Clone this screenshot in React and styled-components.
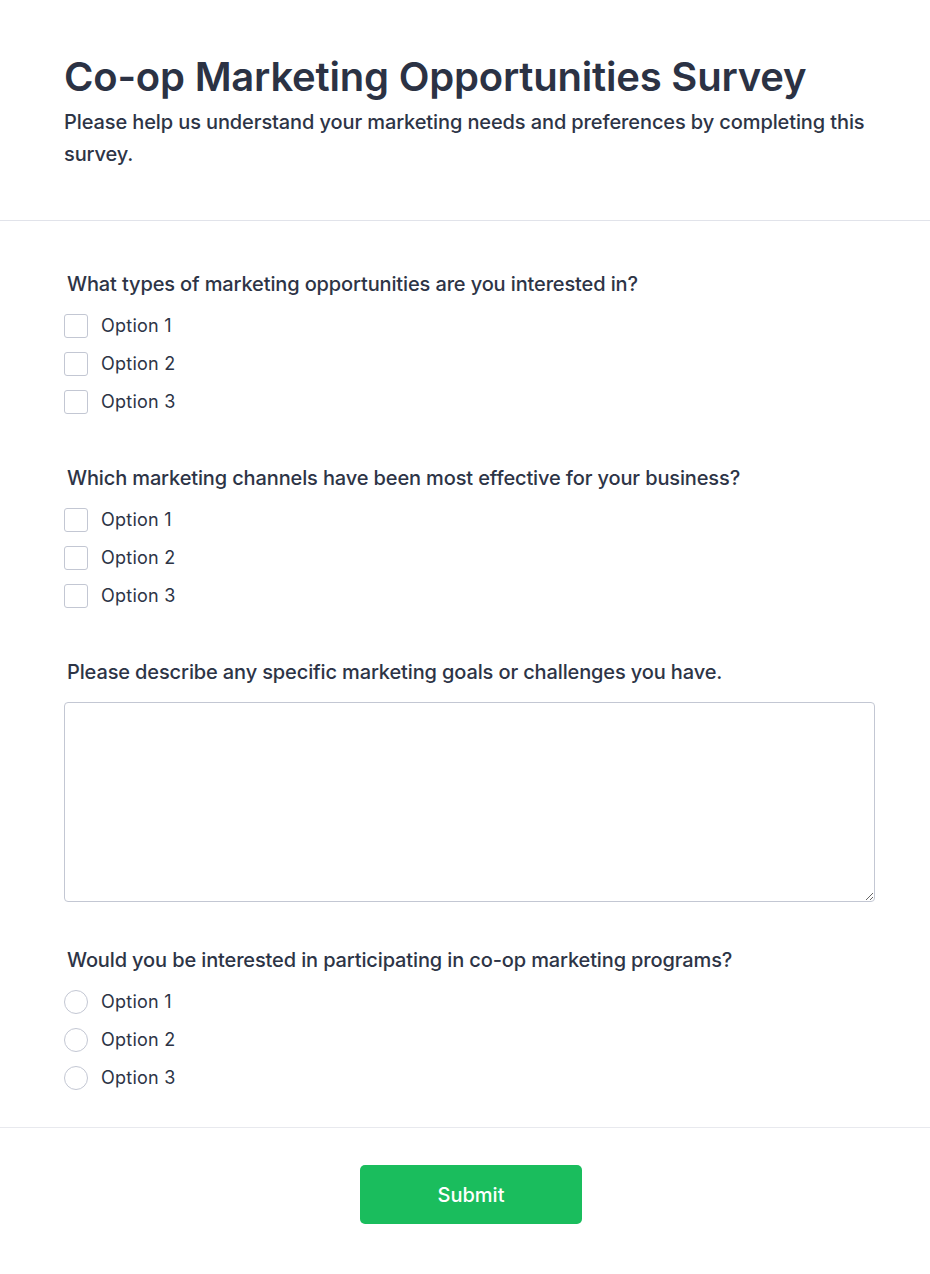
import React from 'react'
import styled, { createGlobalStyle } from 'styled-components'

const GlobalStyle = createGlobalStyle`
  html, body {
    margin: 0;
    padding: 0;
    background: #ffffff;
  }
  body {
    font-family: 'Inter', 'Noto Sans', sans-serif;
    color: #2d3446;
  }
  * { box-sizing: border-box; }
`

const Page = styled.div`
  width: 930px;
  min-height: 1274px;
  background: #ffffff;
`

const Header = styled.header`
  padding: 57px 55px 50px 64px;
  border-bottom: 1px solid #e1e3ea;
`

const Title = styled.h1`
  margin: 0 0 9px;
  font-size: 40px;
  line-height: 40px;
  font-weight: 600;
  color: #2b3244;
  letter-spacing: -0.2px;
`

const Subtitle = styled.p`
  margin: 0;
  font-size: 20px;
  line-height: 32px;
  font-weight: 500;
  letter-spacing: -0.11px;
  color: #2d3446;
`

const Form = styled.form`
  padding: 49px 55px 35px 64px;
  border-bottom: 1px solid #e8e9ee;
  display: flex;
  flex-direction: column;
  gap: 48px;
`

const Question = styled.div`
  display: flex;
  flex-direction: column;
`

const QuestionLabel = styled.div`
  padding-left: 3px;
  margin-bottom: 14px;
  font-size: 20px;
  line-height: 28px;
  font-weight: 500;
  letter-spacing: -0.13px;
  color: #2d3446;
`

const Options = styled.div`
  display: flex;
  flex-direction: column;
  gap: 10px;
`

const OptionRow = styled.label`
  display: flex;
  align-items: center;
  gap: 13px;
  height: 28px;
  font-size: 18px;
  line-height: 28px;
  letter-spacing: 0.25px;
  color: #2d3446;
  cursor: pointer;
`

const Box = styled.input`
  appearance: none;
  margin: 0;
  width: 24px;
  height: 24px;
  flex: none;
  background: #fff;
  border: 1px solid #c3c7d3;
  border-radius: ${p => (p.type === 'radio' ? '50%' : '3px')};
  cursor: pointer;
`

const TextArea = styled.textarea`
  display: block;
  width: 100%;
  height: 200px;
  margin: 2px 0 -4px;
  border: 1px solid #c3c7d3;
  border-radius: 4px;
  background: #fff;
  font-family: inherit;
  font-size: 16px;
  padding: 10px 12px;
  resize: vertical;
`

const Footer = styled.div`
  padding: 37px 55px 50px 64px;
  display: flex;
  justify-content: center;
`

const SubmitButton = styled.button`
  width: 222px;
  height: 59px;
  margin-left: 3px;
  border: none;
  border-radius: 5px;
  background: #1abd5d;
  color: #ffffff;
  font-family: inherit;
  font-size: 20px;
  font-weight: 500;
  cursor: pointer;
`

const questions = [
  { kind: 'checkbox', label: 'What types of marketing opportunities are you interested in?' },
  { kind: 'checkbox', label: 'Which marketing channels have been most effective for your business?' },
  { kind: 'text', label: 'Please describe any specific marketing goals or challenges you have.' },
  { kind: 'radio', label: 'Would you be interested in participating in co-op marketing programs?' },
]

const options = ['Option 1', 'Option 2', 'Option 3']

const App = () => {
  return (
    <Page>
      <GlobalStyle />
      <Header>
        <Title>Co-op Marketing Opportunities Survey</Title>
        <Subtitle>
          Please help us understand your marketing needs and preferences by completing this survey.
        </Subtitle>
      </Header>

      <Form onSubmit={e => e.preventDefault()}>
        {questions.map((q, i) => (
          <Question key={i}>
            <QuestionLabel>{q.label}</QuestionLabel>
            {q.kind === 'text' ? (
              <TextArea />
            ) : (
              <Options>
                {options.map(o => (
                  <OptionRow key={o}>
                    <Box type={q.kind} name={`q${i}`} />
                    {o}
                  </OptionRow>
                ))}
              </Options>
            )}
          </Question>
        ))}
      </Form>

      <Footer>
        <SubmitButton type="button">Submit</SubmitButton>
      </Footer>
    </Page>
  )
}

export default App
